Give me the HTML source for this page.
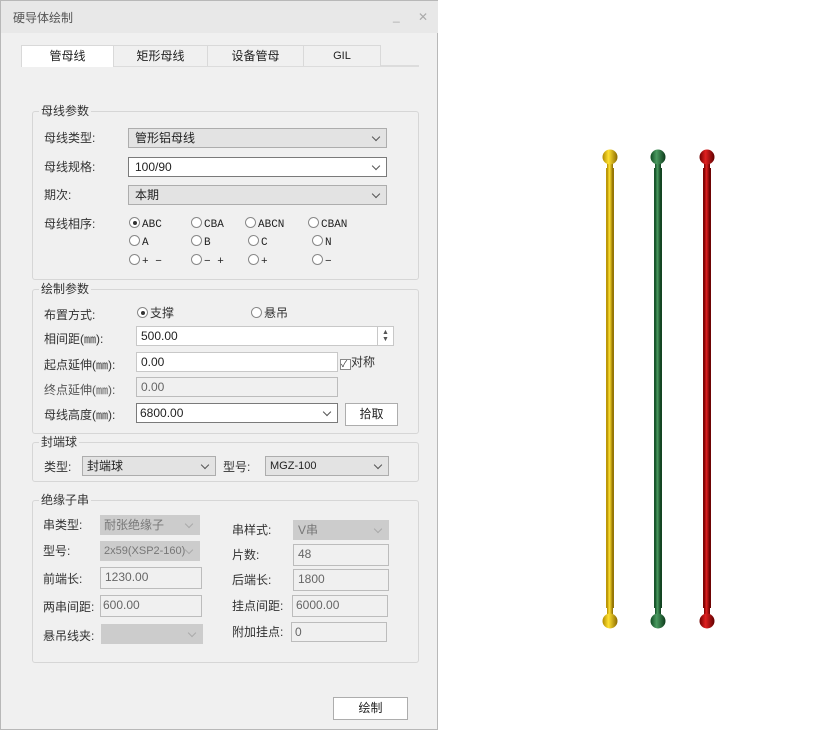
<!DOCTYPE html>
<html><head><meta charset="utf-8"><style>
*{box-sizing:border-box;margin:0;padding:0}
body{width:818px;height:730px;background:#fff;position:relative;overflow:hidden;font-family:"Liberation Sans","Noto Sans CJK SC",sans-serif;font-size:12px;color:#222}
.a{position:absolute}
#dlg{left:0;top:0;width:438px;height:730px;border:1px solid #b8b8b8;background:#f0f0f0}
#title{left:0;top:0;width:437px;height:32px;background:#e8e8e8}
.lbl{position:absolute;white-space:nowrap;font-size:12px;color:#333;line-height:14px}
.grp{position:absolute;border:1px solid #d6d6d6;border-radius:3px}
.gl{position:absolute;top:-8px;left:6px;background:#f0f0f0;padding:0 2px;color:#333;line-height:14px}
.cb{position:absolute;border:1px solid #adadad;background:#e3e3e3;padding:2px 6px;height:20px;line-height:14px}
.cb.w{background:#fff;border-color:#7a7a7a}
.cb.d{background:#ccc;border-color:#ccc;color:#777}
.cb:after{content:"";position:absolute;right:7px;top:5px;width:5px;height:5px;border-right:1px solid #555;border-bottom:1px solid #555;transform:rotate(45deg)}
.cb.d:after{border-color:#aaa}
.in{position:absolute;border:1px solid #c8c8c8;background:#fff;padding:2px 4px;height:20px;line-height:14px}
.in.d{background:#f0f0f0;border-color:#bcbcbc;color:#666}
.r{position:absolute;font-family:"Liberation Mono","Noto Sans CJK SC",monospace;font-size:11px;white-space:nowrap;line-height:14px}
.r i{display:inline-block;width:11px;height:11px;border:1px solid #888;border-radius:50%;vertical-align:-1px;margin-right:2px;background:#fff;position:relative}
.r i.on:after{content:"";position:absolute;left:2.5px;top:2.5px;width:4px;height:4px;border-radius:50%;background:#333}
.btn{position:absolute;border:1px solid #adadad;background:#fff;text-align:center;line-height:20px}
.tab{position:absolute;top:44px;height:21px;border:1px solid #d9d9d9;border-bottom:none;background:#f0f0f0;text-align:center;line-height:20px;font-size:12px}
</style></head><body>
<div id="dlg" class="a">
<div id="title" class="a"></div>
<div class="lbl" style="left:12px;top:10px;color:#555">硬导体绘制</div>
<div class="lbl" style="left:392px;top:8px;color:#aaa">_</div>
<div class="lbl" style="left:417px;top:9px;color:#aaa">✕</div>
<div class="a" style="left:20px;top:64px;width:398px;height:2px;background:#dcdcdc"></div>
<div class="tab" style="left:20px;width:93px;background:#fff;height:22px">管母线</div>
<div class="tab" style="left:112px;width:95px">矩形母线</div>
<div class="tab" style="left:206px;width:97px">设备管母</div>
<div class="tab" style="left:302px;width:78px;font-size:11px">GIL</div>

<div class="grp" style="left:31px;top:110px;width:387px;height:169px"><span class="gl">母线参数</span></div>
<div class="lbl" style="left:43px;top:130px">母线类型:</div>
<div class="cb" style="left:127px;top:127px;width:259px">管形铝母线</div>
<div class="lbl" style="left:43px;top:159px">母线规格:</div>
<div class="cb w" style="left:127px;top:156px;width:259px">100/90</div>
<div class="lbl" style="left:43px;top:187px">期次:</div>
<div class="cb" style="left:127px;top:184px;width:259px">本期</div>
<div class="lbl" style="left:43px;top:216px">母线相序:</div>
<div class="r" style="left:128px;top:216px"><i class="on"></i>ABC</div>
<div class="r" style="left:190px;top:216px"><i></i>CBA</div>
<div class="r" style="left:244px;top:216px"><i></i>ABCN</div>
<div class="r" style="left:307px;top:216px"><i></i>CBAN</div>
<div class="r" style="left:128px;top:234px"><i></i>A</div>
<div class="r" style="left:190px;top:234px"><i></i>B</div>
<div class="r" style="left:247px;top:234px"><i></i>C</div>
<div class="r" style="left:311px;top:234px"><i></i>N</div>
<div class="r" style="left:128px;top:253px"><i></i>+ −</div>
<div class="r" style="left:190px;top:253px"><i></i>− +</div>
<div class="r" style="left:247px;top:253px"><i></i>+</div>
<div class="r" style="left:311px;top:253px"><i></i>−</div>

<div class="grp" style="left:31px;top:288px;width:387px;height:145px"><span class="gl">绘制参数</span></div>
<div class="lbl" style="left:43px;top:307px">布置方式:</div>
<div class="lbl" style="left:136px;top:305px"><span class="r" style="position:static"><i class="on"></i></span>支撑</div>
<div class="lbl" style="left:250px;top:305px"><span class="r" style="position:static"><i></i></span>悬吊</div>
<div class="lbl" style="left:43px;top:331px">相间距(㎜):</div>
<div class="in" style="left:135px;top:325px;width:242px">500.00</div>
<div class="in" style="left:376px;top:325px;width:17px;font-size:7px;line-height:7px;padding:2px 4px;color:#555">▲<br>▼</div>
<div class="lbl" style="left:43px;top:357px">起点延伸(㎜):</div>
<div class="in" style="left:135px;top:351px;width:202px">0.00</div>
<div class="lbl" style="left:339px;top:354px"><span style="display:inline-block;width:11px;height:11px;border:1px solid #888;background:#fff;font-size:9px;line-height:9px;vertical-align:-1px;color:#333">✓</span>对称</div>
<div class="lbl" style="left:43px;top:382px;color:#555">终点延伸(㎜):</div>
<div class="in d" style="left:135px;top:376px;width:202px">0.00</div>
<div class="lbl" style="left:43px;top:407px">母线高度(㎜):</div>
<div class="cb w" style="left:135px;top:402px;width:202px;padding-left:3px">6800.00</div>
<div class="btn" style="left:344px;top:402px;width:53px;height:23px">拾取</div>

<div class="grp" style="left:31px;top:441px;width:387px;height:40px"><span class="gl">封端球</span></div>
<div class="lbl" style="left:43px;top:459px">类型:</div>
<div class="cb" style="left:81px;top:455px;width:134px;padding-left:4px">封端球</div>
<div class="lbl" style="left:222px;top:459px">型号:</div>
<div class="cb" style="left:264px;top:455px;width:124px;padding-left:4px;font-size:11px">MGZ-100</div>

<div class="grp" style="left:31px;top:499px;width:387px;height:163px"><span class="gl">绝缘子串</span></div>
<div class="lbl" style="left:42px;top:517px">串类型:</div>
<div class="cb d" style="left:99px;top:514px;width:100px;padding-left:3px">耐张绝缘子</div>
<div class="lbl" style="left:42px;top:543px">型号:</div>
<div class="cb d" style="left:99px;top:540px;width:100px;padding-left:3px;font-size:11px">2x59(XSP2-160)</div>
<div class="lbl" style="left:42px;top:571px">前端长:</div>
<div class="in d" style="left:99px;top:566px;width:102px;height:22px">1230.00</div>
<div class="lbl" style="left:42px;top:599px">两串间距:</div>
<div class="in d" style="left:99px;top:594px;width:102px;height:22px;padding-left:2px">600.00</div>
<div class="lbl" style="left:42px;top:628px">悬吊线夹:</div>
<div class="cb d" style="left:100px;top:623px;width:102px"></div>
<div class="lbl" style="left:231px;top:522px">串样式:</div>
<div class="cb d" style="left:292px;top:519px;width:96px;padding-left:4px">V串</div>
<div class="lbl" style="left:231px;top:547px">片数:</div>
<div class="in d" style="left:292px;top:543px;width:96px;height:22px">48</div>
<div class="lbl" style="left:231px;top:572px">后端长:</div>
<div class="in d" style="left:292px;top:568px;width:96px;height:22px">1800</div>
<div class="lbl" style="left:231px;top:598px">挂点间距:</div>
<div class="in d" style="left:291px;top:594px;width:96px;height:22px;padding-left:3px">6000.00</div>
<div class="lbl" style="left:231px;top:624px">附加挂点:</div>
<div class="in d" style="left:290px;top:621px;width:96px;padding-left:3px">0</div>

<div class="btn" style="left:332px;top:696px;width:75px;height:23px">绘制</div>
</div>

<svg class="a" style="left:590px;top:140px" width="140" height="500" viewBox="0 0 140 500">
<defs>
<linearGradient id="gy" x1="0" x2="1"><stop offset="0" stop-color="#b08a00"/><stop offset=".4" stop-color="#ffe030"/><stop offset="1" stop-color="#8a6a00"/></linearGradient>
<linearGradient id="gg" x1="0" x2="1"><stop offset="0" stop-color="#0f4a22"/><stop offset=".4" stop-color="#4a9a60"/><stop offset="1" stop-color="#0c3a1a"/></linearGradient>
<linearGradient id="gr" x1="0" x2="1"><stop offset="0" stop-color="#700000"/><stop offset=".4" stop-color="#e02020"/><stop offset="1" stop-color="#600000"/></linearGradient>
</defs>
<g><rect x="16" y="28" width="8" height="440" fill="url(#gy)"/><rect x="17" y="20" width="6" height="456" fill="url(#gy)"/><circle cx="20" cy="17" r="7.5" fill="url(#gy)"/><circle cx="20" cy="481" r="7.5" fill="url(#gy)"/></g>
<g><rect x="64" y="28" width="8" height="440" fill="url(#gg)"/><rect x="65" y="20" width="6" height="456" fill="url(#gg)"/><circle cx="68" cy="17" r="7.5" fill="url(#gg)"/><circle cx="68" cy="481" r="7.5" fill="url(#gg)"/></g>
<g><rect x="113" y="28" width="8" height="440" fill="url(#gr)"/><rect x="114" y="20" width="6" height="456" fill="url(#gr)"/><circle cx="117" cy="17" r="7.5" fill="url(#gr)"/><circle cx="117" cy="481" r="7.5" fill="url(#gr)"/></g>
</svg>
</body></html>
